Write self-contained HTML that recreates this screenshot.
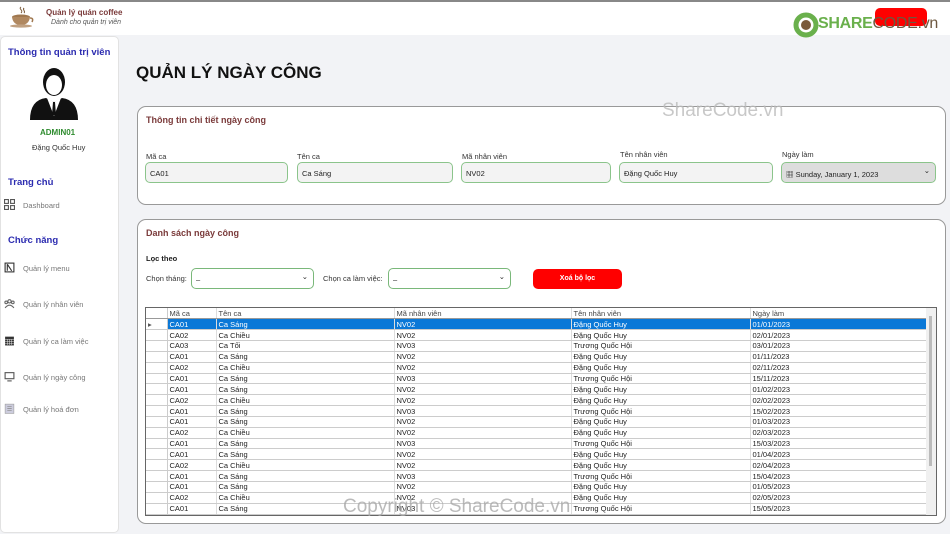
<!DOCTYPE html>
<html><head><meta charset="utf-8"><style>
*{box-sizing:border-box;margin:0;padding:0}
body{width:950px;height:534px;overflow:hidden;background:#f2f3f6;font-family:"Liberation Sans","Noto Sans CJK SC",sans-serif;position:relative;color:#222}
.a{position:absolute}
.top{left:0;top:0;width:950px;height:35px;background:#fff;border-top:2px solid #888}
.side{left:0;top:36px;width:119px;height:497px;background:#fff;border:1px solid #e2e2e2;border-radius:5px}
.card{background:#fff;border:1px solid #999;border-radius:9px}
.lbl{font-size:7.5px;color:#333}
.inp{height:21px;border:1px solid #8bc48b;border-radius:5px;background:#f3f3f3;font-size:7.5px;padding:6px 4px;color:#222}
.h{font-size:9px;font-weight:bold;color:#7a3a3a}
.menu{font-size:7.5px;color:#777;left:23px}
.ic{left:4px;width:11px;height:11px}
table{border-collapse:collapse;font-size:7.5px;table-layout:fixed}
td{height:10.85px;border-right:1px solid #ddd;border-bottom:1px solid #ccc;padding:0 2px;white-space:nowrap;overflow:hidden;line-height:9px}
td:first-child{border-right:1px solid #ccc}
tr.s td{background:#0a78d7;color:#fff}
tr.s td:first-child{background:#fff;color:#555}
tr.hd td{color:#444;border-bottom:1px solid #999}
</style></head><body>
<div class="a top"></div>
<svg class="a" style="left:9px;top:6px" width="26" height="22" viewBox="0 0 26 22"><path d="M12 1c-3 2 3 3 0 6M15 2c-2 2 2 3 0 5" stroke="#7a5a3a" fill="none"/><ellipse cx="12" cy="11" rx="9" ry="2.5" fill="#a07850"/><path d="M3 11q1 8 9 8q8 0 9-8" fill="#b08860"/><path d="M21 12q4 0 2 4" stroke="#a07850" fill="none" stroke-width="1.5"/><ellipse cx="12" cy="20" rx="11" ry="1.6" fill="#c0a080"/></svg>
<div class="a" style="left:46px;top:8px;font-size:8px;font-weight:bold;color:#7a3a3a">Quản lý quán coffee</div>
<div class="a" style="left:51px;top:19px;font-size:7px;font-style:italic;color:#555">Dành cho quản trị viên</div>
<div class="a" style="left:875px;top:8px;width:52px;height:18px;background:#f00;border-radius:5px"></div>
<svg class="a" style="left:793px;top:12px" width="26" height="26" viewBox="0 0 26 26"><circle cx="13" cy="13" r="10" fill="none" stroke="#6ab04c" stroke-width="5"/><circle cx="13" cy="13" r="5" fill="#7a5a3a"/></svg>
<div class="a" style="left:818px;top:15px;font-size:16px;font-weight:bold;color:#6ab04c;letter-spacing:-0.3px">SHARE<span style="color:#6d5840;font-weight:normal">CODE.vn</span></div>

<div class="a side"></div>
<div class="a" style="left:8px;top:47px;font-size:9.5px;font-weight:bold;color:#2b2bb0">Thông tin quản trị viên</div>
<svg class="a" style="left:29px;top:64px" width="50" height="56" viewBox="0 0 50 56"><ellipse cx="25" cy="18" rx="11" ry="14" fill="#111"/><ellipse cx="25" cy="21" rx="8" ry="10" fill="#fff"/><path d="M15 14q10-12 20 0q-2-7-10-8q-8 1-10 8z" fill="#111"/><path d="M1 56q0-20 16-22l8 4l8-4q16 2 16 22z" fill="#111"/><path d="M18 34l7 4l7-4l-7 18z" fill="#fff"/><path d="M24 38h2l1 13h-4z" fill="#111"/></svg>
<div class="a" style="left:40px;top:128px;font-size:8px;font-weight:bold;color:#2e8b2e">ADMIN01</div>
<div class="a" style="left:32px;top:143px;font-size:7.5px;color:#333">Đặng Quốc Huy</div>
<div class="a" style="left:8px;top:177px;font-size:9.5px;font-weight:bold;color:#2b2bb0">Trang chủ</div>
<svg class="a ic" style="top:199px" viewBox="0 0 10 10"><rect x=".5" y=".5" width="3.5" height="3.5" fill="none" stroke="#555"/><rect x="6" y=".5" width="3.5" height="3.5" fill="none" stroke="#555"/><rect x=".5" y="6" width="3.5" height="3.5" fill="none" stroke="#555"/><rect x="6" y="6" width="3.5" height="3.5" fill="none" stroke="#555"/></svg>
<div class="a menu" style="top:201px">Dashboard</div>
<div class="a" style="left:8px;top:235px;font-size:9.5px;font-weight:bold;color:#2b2bb0">Chức năng</div>
<svg class="a ic" style="top:262px" viewBox="0 0 10 10"><rect x="1" y="1" width="8" height="8" fill="none" stroke="#333"/><path d="M3 2v6M3 2l4 6" stroke="#333"/></svg>
<div class="a menu" style="top:264px">Quản lý menu</div>
<svg class="a ic" style="top:298px" viewBox="0 0 10 10"><circle cx="5" cy="3" r="1.5" fill="none" stroke="#666"/><circle cx="2" cy="4" r="1.2" fill="none" stroke="#666"/><circle cx="8" cy="4" r="1.2" fill="none" stroke="#666"/><path d="M1 9q4-5 8 0" fill="none" stroke="#666"/></svg>
<div class="a menu" style="top:300px">Quản lý nhân viên</div>
<svg class="a ic" style="top:335px" viewBox="0 0 10 10"><rect x="1" y="1.5" width="8" height="8" fill="#333"/><path d="M1 4h8M3 4v5M5 4v5M7 4v5M1 6h8M1 8h8" stroke="#fff" stroke-width=".4"/></svg>
<div class="a menu" style="top:337px">Quản lý ca làm việc</div>
<svg class="a ic" style="top:371px" viewBox="0 0 10 10"><rect x="1" y="1.5" width="8" height="5.5" fill="none" stroke="#555"/><path d="M3 9h4" stroke="#555"/></svg>
<div class="a menu" style="top:373px">Quản lý ngày công</div>
<svg class="a ic" style="top:403px" viewBox="0 0 10 10"><rect x="1" y="1" width="8" height="8.5" fill="#ccd" stroke="#999" stroke-width=".5"/><path d="M3 3h4M3 5h4M3 7h4" stroke="#888" stroke-width=".6"/></svg>
<div class="a menu" style="top:405px">Quản lý hoá đơn</div>

<div class="a" style="left:136px;top:63px;font-size:17px;font-weight:bold;color:#111">QUẢN LÝ NGÀY CÔNG</div>

<div class="a card" style="left:137px;top:106px;width:809px;height:99px"></div>
<div class="a h" style="left:146px;top:115px">Thông tin chi tiết ngày công</div>
<div class="a lbl" style="left:146px;top:152px">Mã ca</div>
<div class="a inp" style="left:145px;top:162px;width:143px">CA01</div>
<div class="a lbl" style="left:297px;top:152px">Tên ca</div>
<div class="a inp" style="left:297px;top:162px;width:156px">Ca Sáng</div>
<div class="a lbl" style="left:462px;top:152px">Mã nhân viên</div>
<div class="a inp" style="left:461px;top:162px;width:150px">NV02</div>
<div class="a lbl" style="left:620px;top:150px">Tên nhân viên</div>
<div class="a inp" style="left:619px;top:162px;width:154px">Đặng Quốc Huy</div>
<div class="a lbl" style="left:782px;top:150px">Ngày làm</div>
<div class="a inp" style="left:781px;top:162px;width:155px;background:#ddd">▦ Sunday, January 1, 2023<span style="position:absolute;right:5px;top:3px">⌄</span></div>

<div class="a card" style="left:137px;top:219px;width:809px;height:305px"></div>
<div class="a h" style="left:146px;top:228px">Danh sách ngày công</div>
<div class="a" style="left:146px;top:254px;font-size:7.5px;font-weight:bold">Lọc theo</div>
<div class="a lbl" style="left:146px;top:274px">Chọn tháng:</div>
<div class="a inp" style="left:191px;top:268px;width:123px;background:#fff;border-color:#7ab87a">–<span style="position:absolute;right:5px;top:3px">⌄</span></div>
<div class="a lbl" style="left:323px;top:274px">Chọn ca làm việc:</div>
<div class="a inp" style="left:388px;top:268px;width:123px;background:#fff;border-color:#7ab87a">–<span style="position:absolute;right:5px;top:3px">⌄</span></div>
<div class="a" style="left:533px;top:269px;width:89px;height:20px;background:#f00;border-radius:5px;color:#fff;font-size:7px;font-weight:bold;text-align:center;line-height:20px">Xoá bộ lọc</div>

<div class="a" style="left:145px;top:307px;width:792px;height:209px;border:1px solid #666;background:#fff;overflow:hidden">
<div class="a" style="right:0;top:0;width:10px;height:208px;background:#f0f0f0"><div style="margin:8px 3px;width:3px;height:150px;background:#bbb"></div></div>
<table style="width:781px">
<colgroup><col style="width:21px"><col style="width:49px"><col style="width:178px"><col style="width:177px"><col style="width:179px"><col style="width:177px"></colgroup>
<tr class="hd"><td></td><td>Mã ca</td><td>Tên ca</td><td>Mã nhân viên</td><td>Tên nhân viên</td><td>Ngày làm</td></tr>
<tr class="s"><td>▸</td><td>CA01</td><td>Ca Sáng</td><td>NV02</td><td>Đặng Quốc Huy</td><td>01/01/2023</td></tr>
<tr><td></td><td>CA02</td><td>Ca Chiều</td><td>NV02</td><td>Đặng Quốc Huy</td><td>02/01/2023</td></tr>
<tr><td></td><td>CA03</td><td>Ca Tối</td><td>NV03</td><td>Trương Quốc Hội</td><td>03/01/2023</td></tr>
<tr><td></td><td>CA01</td><td>Ca Sáng</td><td>NV02</td><td>Đặng Quốc Huy</td><td>01/11/2023</td></tr>
<tr><td></td><td>CA02</td><td>Ca Chiều</td><td>NV02</td><td>Đặng Quốc Huy</td><td>02/11/2023</td></tr>
<tr><td></td><td>CA01</td><td>Ca Sáng</td><td>NV03</td><td>Trương Quốc Hội</td><td>15/11/2023</td></tr>
<tr><td></td><td>CA01</td><td>Ca Sáng</td><td>NV02</td><td>Đặng Quốc Huy</td><td>01/02/2023</td></tr>
<tr><td></td><td>CA02</td><td>Ca Chiều</td><td>NV02</td><td>Đặng Quốc Huy</td><td>02/02/2023</td></tr>
<tr><td></td><td>CA01</td><td>Ca Sáng</td><td>NV03</td><td>Trương Quốc Hội</td><td>15/02/2023</td></tr>
<tr><td></td><td>CA01</td><td>Ca Sáng</td><td>NV02</td><td>Đặng Quốc Huy</td><td>01/03/2023</td></tr>
<tr><td></td><td>CA02</td><td>Ca Chiều</td><td>NV02</td><td>Đặng Quốc Huy</td><td>02/03/2023</td></tr>
<tr><td></td><td>CA01</td><td>Ca Sáng</td><td>NV03</td><td>Trương Quốc Hội</td><td>15/03/2023</td></tr>
<tr><td></td><td>CA01</td><td>Ca Sáng</td><td>NV02</td><td>Đặng Quốc Huy</td><td>01/04/2023</td></tr>
<tr><td></td><td>CA02</td><td>Ca Chiều</td><td>NV02</td><td>Đặng Quốc Huy</td><td>02/04/2023</td></tr>
<tr><td></td><td>CA01</td><td>Ca Sáng</td><td>NV03</td><td>Trương Quốc Hội</td><td>15/04/2023</td></tr>
<tr><td></td><td>CA01</td><td>Ca Sáng</td><td>NV02</td><td>Đặng Quốc Huy</td><td>01/05/2023</td></tr>
<tr><td></td><td>CA02</td><td>Ca Chiều</td><td>NV02</td><td>Đặng Quốc Huy</td><td>02/05/2023</td></tr>
<tr><td></td><td>CA01</td><td>Ca Sáng</td><td>NV03</td><td>Trương Quốc Hội</td><td>15/05/2023</td></tr>
</table></div>

<div class="a" style="left:662px;top:100px;font-size:19px;color:#bbb;opacity:.8">ShareCode.vn</div>
<div class="a" style="left:343px;top:496px;font-size:19px;color:#aaa;opacity:.8">Copyright © ShareCode.vn</div>
</body></html>
